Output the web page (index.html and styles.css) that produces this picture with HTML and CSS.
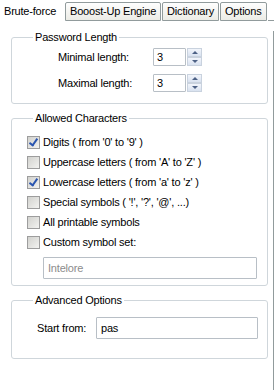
FILE: index.html
```html
<!DOCTYPE html>
<html lang="en">
<head>
    <meta charset="UTF-8">
    <title>Brute-force</title>
    <link rel="stylesheet" href="styles.css">
</head>
<body>

<div class="tabs">
    <div class="tab active">Brute-force</div>
    <div class="tab">Booost-Up Engine</div>
    <div class="tab">Dictionary</div>
    <div class="tab">Options</div>
    <div class="tab-fill"></div>
</div>

<div class="panel">
    <fieldset class="group group-length">
        <legend>Password Length</legend>
        <div class="len-row">
            <span class="len-label">Minimal length:</span>
            <span class="spin-input">3</span>
            <span class="spin-btns">
                <span class="spin-btn"><span class="arrow-up"></span></span>
                <span class="spin-btn"><span class="arrow-down"></span></span>
            </span>
        </div>
        <div class="len-row">
            <span class="len-label">Maximal length:</span>
            <span class="spin-input">3</span>
            <span class="spin-btns">
                <span class="spin-btn"><span class="arrow-up"></span></span>
                <span class="spin-btn"><span class="arrow-down"></span></span>
            </span>
        </div>
    </fieldset>

    <fieldset class="group group-chars">
        <legend>Allowed Characters</legend>
        <div class="check-row"><span class="check checked"></span>Digits ( from '0' to '9' )</div>
        <div class="check-row"><span class="check"></span>Uppercase letters ( from 'A' to 'Z' )</div>
        <div class="check-row"><span class="check checked"></span>Lowercase letters ( from 'a' to 'z' )</div>
        <div class="check-row"><span class="check"></span>Special symbols ( '!', '?', '@', ...)</div>
        <div class="check-row"><span class="check"></span>All printable symbols</div>
        <div class="check-row"><span class="check"></span>Custom symbol set:</div>
        <div class="text-input custom-set disabled">Intelore</div>
    </fieldset>

    <fieldset class="group group-adv">
        <legend>Advanced Options</legend>
        <div class="start-row">
            <span class="start-label">Start from:</span>
            <div class="text-input start-input">pas</div>
        </div>
    </fieldset>
</div>

</body>
</html>
```

FILE: styles.css
```css
body {
    margin: 0;
    background: #fff;
    font-family: "Liberation Sans", Arial, sans-serif;
    font-size: 11px;
    letter-spacing: -0.2px;
    color: #000;
}
.tabs {
    display: flex;
    align-items: flex-end;
    height: 21px;
}
.tab {
    height: 17px;
    line-height: 17px;
    padding: 0 4px;
    border: 1px solid #919b9c;
    border-radius: 2px 2px 0 0;
    background: linear-gradient(#fefefe, #ecece6);
    margin-right: 1px;
}
.tab.active {
    height: 20px;
    line-height: 20px;
    width: 57px;
    border: none;
    background: #fff;
    margin-right: 0;
}
.tab-fill {
    width: 6px;
    border-bottom: 1px solid #919b9c;
}
.panel {
    width: 274px;
    height: 369px;
    border-right: 1px solid #919b9c;
    padding-left: 11px;
    box-sizing: border-box;
}
.group {
    width: 257px;
    box-sizing: border-box;
    margin: 0;
    border: 1px solid #cfd6db;
    border-radius: 3px;
    padding: 0 0 0 14px;
}
.group legend {
    padding: 0 2px;
    margin-left: 7px;
}
.group-length {
    margin-top: 10px;
    height: 73px;
    padding-top: 5px;
}
.len-row {
    display: flex;
    align-items: center;
    height: 18px;
    margin-bottom: 8px;
}
.len-label {
    width: 95px;
    margin-left: 32px;
}
.spin-input {
    width: 33px;
    height: 18px;
    line-height: 16px;
    box-sizing: border-box;
    border: 1px solid #b8bfc6;
    padding-left: 3px;
    border-radius: 1px;
}
.spin-btns {
    display: flex;
    flex-direction: column;
    margin-left: 1px;
}
.spin-btn {
    width: 15px;
    height: 9px;
    box-sizing: border-box;
    border: 1px solid #c9d2de;
    background: linear-gradient(#f2f5fb, #d9e2f0);
    display: flex;
    align-items: center;
    justify-content: center;
}
.arrow-up {
    border-left: 3px solid transparent;
    border-right: 3px solid transparent;
    border-bottom: 3px solid #4d6185;
}
.arrow-down {
    border-left: 3px solid transparent;
    border-right: 3px solid transparent;
    border-top: 3px solid #4d6185;
}
.group-chars {
    margin-top: 8px;
    height: 174px;
    padding-top: 8px;
}
.check-row {
    display: flex;
    align-items: center;
    height: 20px;
    padding-left: 1px;
}
.check {
    width: 13px;
    height: 13px;
    box-sizing: border-box;
    border: 1px solid #9d9d9d;
    background: linear-gradient(135deg, #d2d2ce, #f2f2f0);
    margin-right: 3px;
    position: relative;
}
.check.checked::after {
    content: "";
    position: absolute;
    left: 3px;
    top: 0;
    width: 3px;
    height: 7px;
    border: solid #2a55b0;
    border-width: 0 2px 2px 0;
    transform: rotate(35deg);
}
.text-input {
    box-sizing: border-box;
    border: 1px solid #b8bfc6;
    border-radius: 1px;
    height: 22px;
    line-height: 20px;
    padding-left: 4px;
    background: #fff;
}
.custom-set {
    width: 214px;
    margin: 5px 0 0 17px;
}
.text-input.disabled {
    color: #8c8c8c;
}
.group-adv {
    margin-top: 8px;
    height: 65px;
    padding-top: 11px;
}
.start-row {
    display: flex;
    align-items: center;
}
.start-label {
    width: 59px;
    margin-left: 11px;
}
.start-input {
    width: 162px;
}
```
